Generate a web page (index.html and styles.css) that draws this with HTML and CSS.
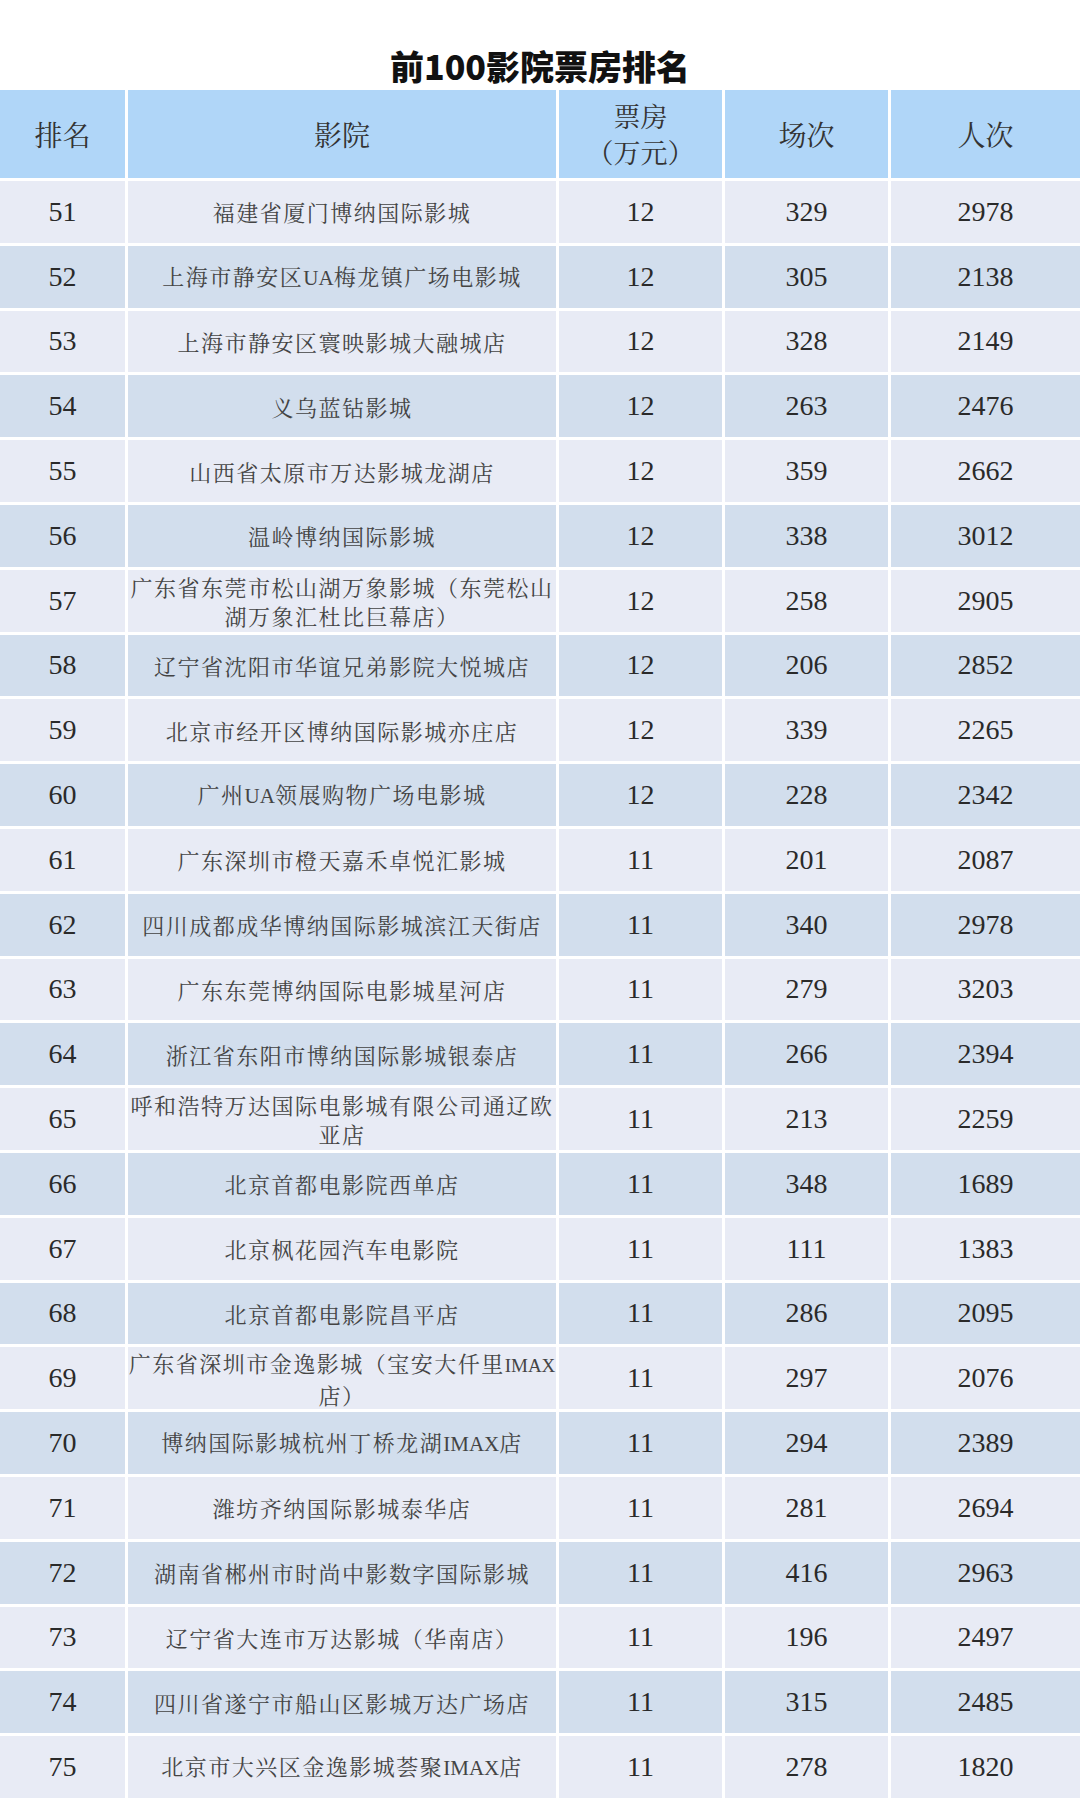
FILE: index.html
```html
<!DOCTYPE html>
<html lang="zh-CN">
<head>
<meta charset="utf-8">
<title>前100影院票房排名</title>
<link rel="stylesheet" href="styles.css">
</head>
<body>
<h1 class="title">前100影院票房排名</h1>
<div class="table">
  <div class="row head">
    <div class="cell">排名</div>
    <div class="cell"><span>影院</span></div>
    <div class="cell two"><span class="line">票房</span><span class="line">（万元）</span></div>
    <div class="cell">场次</div>
    <div class="cell">人次</div>
  </div>
  <div class="row odd"><div class="cell num">51</div><div class="cell name">福建省厦门博纳国际影城</div><div class="cell num">12</div><div class="cell num">329</div><div class="cell num">2978</div></div>
  <div class="row even"><div class="cell num">52</div><div class="cell name"><span>上海市静安区<span class="lat">UA</span>梅龙镇广场电影城</span></div><div class="cell num">12</div><div class="cell num">305</div><div class="cell num">2138</div></div>
  <div class="row odd"><div class="cell num">53</div><div class="cell name">上海市静安区寰映影城大融城店</div><div class="cell num">12</div><div class="cell num">328</div><div class="cell num">2149</div></div>
  <div class="row even"><div class="cell num">54</div><div class="cell name">义乌蓝钻影城</div><div class="cell num">12</div><div class="cell num">263</div><div class="cell num">2476</div></div>
  <div class="row odd"><div class="cell num">55</div><div class="cell name">山西省太原市万达影城龙湖店</div><div class="cell num">12</div><div class="cell num">359</div><div class="cell num">2662</div></div>
  <div class="row even"><div class="cell num">56</div><div class="cell name">温岭博纳国际影城</div><div class="cell num">12</div><div class="cell num">338</div><div class="cell num">3012</div></div>
  <div class="row odd"><div class="cell num">57</div><div class="cell name">广东省东莞市松山湖万象影城（东莞松山<br>湖万象汇杜比巨幕店）</div><div class="cell num">12</div><div class="cell num">258</div><div class="cell num">2905</div></div>
  <div class="row even"><div class="cell num">58</div><div class="cell name">辽宁省沈阳市华谊兄弟影院大悦城店</div><div class="cell num">12</div><div class="cell num">206</div><div class="cell num">2852</div></div>
  <div class="row odd"><div class="cell num">59</div><div class="cell name">北京市经开区博纳国际影城亦庄店</div><div class="cell num">12</div><div class="cell num">339</div><div class="cell num">2265</div></div>
  <div class="row even"><div class="cell num">60</div><div class="cell name"><span>广州<span class="lat">UA</span>领展购物广场电影城</span></div><div class="cell num">12</div><div class="cell num">228</div><div class="cell num">2342</div></div>
  <div class="row odd"><div class="cell num">61</div><div class="cell name">广东深圳市橙天嘉禾卓悦汇影城</div><div class="cell num">11</div><div class="cell num">201</div><div class="cell num">2087</div></div>
  <div class="row even"><div class="cell num">62</div><div class="cell name">四川成都成华博纳国际影城滨江天街店</div><div class="cell num">11</div><div class="cell num">340</div><div class="cell num">2978</div></div>
  <div class="row odd"><div class="cell num">63</div><div class="cell name">广东东莞博纳国际电影城星河店</div><div class="cell num">11</div><div class="cell num">279</div><div class="cell num">3203</div></div>
  <div class="row even"><div class="cell num">64</div><div class="cell name">浙江省东阳市博纳国际影城银泰店</div><div class="cell num">11</div><div class="cell num">266</div><div class="cell num">2394</div></div>
  <div class="row odd"><div class="cell num">65</div><div class="cell name">呼和浩特万达国际电影城有限公司通辽欧<br>亚店</div><div class="cell num">11</div><div class="cell num">213</div><div class="cell num">2259</div></div>
  <div class="row even"><div class="cell num">66</div><div class="cell name">北京首都电影院西单店</div><div class="cell num">11</div><div class="cell num">348</div><div class="cell num">1689</div></div>
  <div class="row odd"><div class="cell num">67</div><div class="cell name">北京枫花园汽车电影院</div><div class="cell num">11</div><div class="cell num">111</div><div class="cell num">1383</div></div>
  <div class="row even"><div class="cell num">68</div><div class="cell name">北京首都电影院昌平店</div><div class="cell num">11</div><div class="cell num">286</div><div class="cell num">2095</div></div>
  <div class="row odd"><div class="cell num">69</div><div class="cell name"><span>广东省深圳市金逸影城（宝安大仟里<span class="lat tight">IMAX</span><br>店）</span></div><div class="cell num">11</div><div class="cell num">297</div><div class="cell num">2076</div></div>
  <div class="row even"><div class="cell num">70</div><div class="cell name"><span>博纳国际影城杭州丁桥龙湖<span class="lat">IMAX</span>店</span></div><div class="cell num">11</div><div class="cell num">294</div><div class="cell num">2389</div></div>
  <div class="row odd"><div class="cell num">71</div><div class="cell name">潍坊齐纳国际影城泰华店</div><div class="cell num">11</div><div class="cell num">281</div><div class="cell num">2694</div></div>
  <div class="row even"><div class="cell num">72</div><div class="cell name">湖南省郴州市时尚中影数字国际影城</div><div class="cell num">11</div><div class="cell num">416</div><div class="cell num">2963</div></div>
  <div class="row odd"><div class="cell num">73</div><div class="cell name">辽宁省大连市万达影城（华南店）</div><div class="cell num">11</div><div class="cell num">196</div><div class="cell num">2497</div></div>
  <div class="row even"><div class="cell num">74</div><div class="cell name">四川省遂宁市船山区影城万达广场店</div><div class="cell num">11</div><div class="cell num">315</div><div class="cell num">2485</div></div>
  <div class="row odd"><div class="cell num">75</div><div class="cell name"><span>北京市大兴区金逸影城荟聚<span class="lat">IMAX</span>店</span></div><div class="cell num">11</div><div class="cell num">278</div><div class="cell num">1820</div></div>
</div>
</body>
</html>
```

FILE: styles.css
```css
html, body {
  margin: 0;
  padding: 0;
  background: #ffffff;
}

body {
  width: 1080px;
  height: 1800px;
  overflow: hidden;
}

.title {
  margin: 0;
  padding: 46px 0 4px;
  height: 40px;
  line-height: 40px;
  text-align: center;
  font-family: "Noto Sans CJK SC", "Noto Sans", sans-serif;
  font-size: 34px;
  font-weight: 900;
  color: #111111;
}

.table {
  display: flex;
  flex-direction: column;
  gap: 3px;
}

.row {
  display: grid;
  grid-template-columns: 125px 428px 163px 163px 1fr;
  column-gap: 3px;
  height: 61.8px;
}

.row.head {
  height: 88px;
}

.cell {
  display: flex;
  align-items: center;
  justify-content: center;
  text-align: center;
  font-family: "Liberation Serif", "Noto Serif CJK SC", "Noto Sans CJK SC", serif;
  color: #333333;
}

.head .cell {
  background: #b0d6f8;
  font-size: 28px;
  line-height: 36px;
  font-family: "Noto Serif CJK SC", "Noto Sans CJK SC", serif;
  color: #333333;
}

.head .two {
  flex-direction: column;
  font-size: 27px;
}

.head .line {
  display: block;
  height: 36px;
  line-height: 36px;
}

.odd .cell {
  background: #e8ebf5;
}

.even .cell {
  background: #d2deed;
}

.num {
  font-size: 28px;
  color: #2a2a2a;
}

.name {
  font-family: "Noto Serif CJK SC", "Noto Sans CJK SC", serif;
  font-size: 22px;
  letter-spacing: 1.5px;
  line-height: 29px;
  color: #444444;
}

.lat {
  font-family: "Liberation Serif", serif;
  font-size: 21px;
  letter-spacing: 0;
}

.lat.tight {
  font-size: 19px;
}
```
